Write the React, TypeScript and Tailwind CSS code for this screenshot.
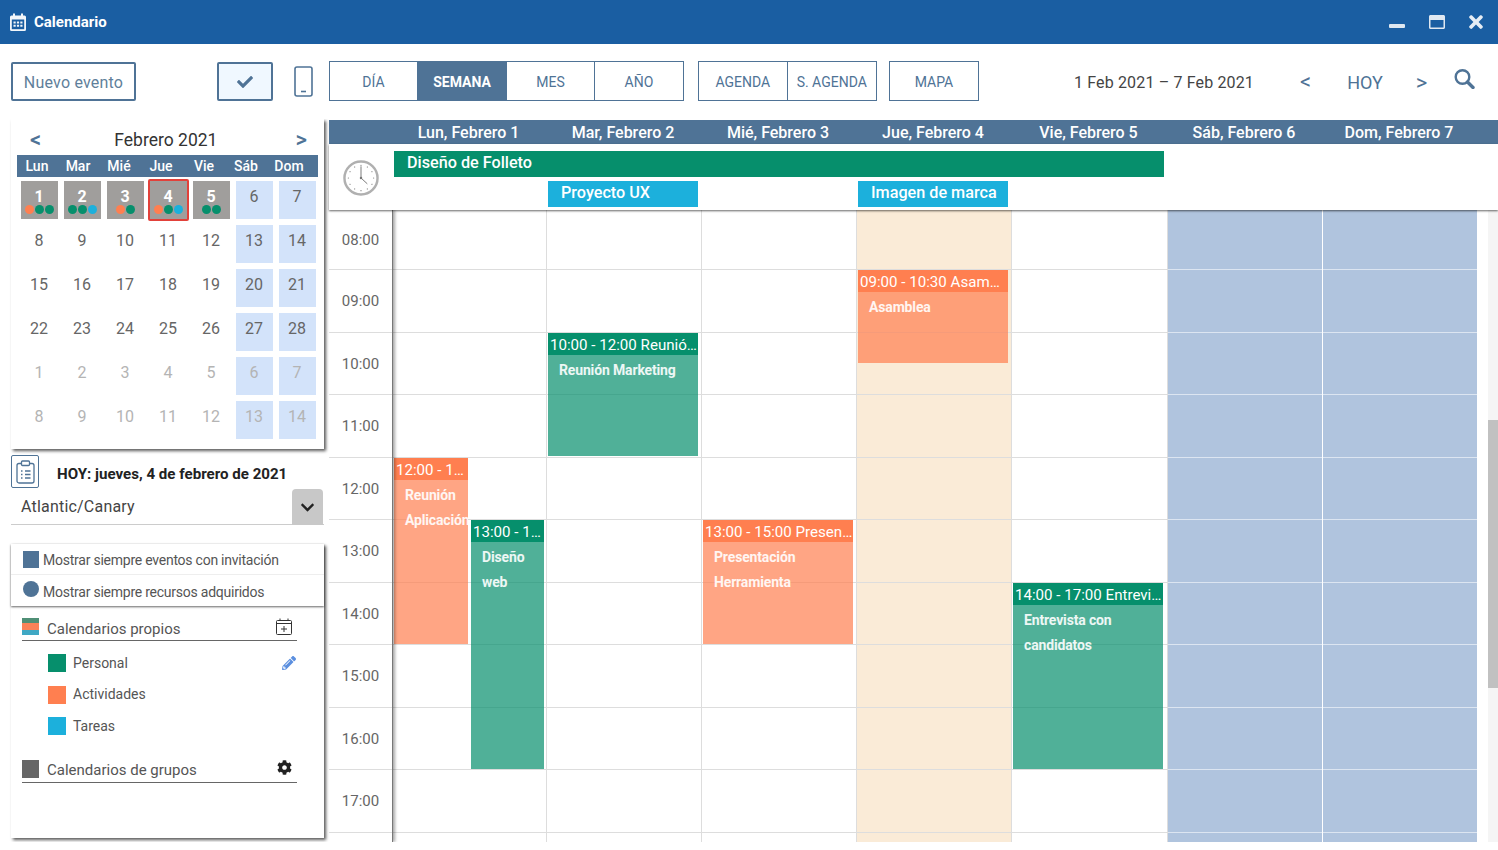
import { FaCheck, FaChevronDown, FaCog, FaPencilAlt, FaRegWindowMaximize, FaTimes } from "react-icons/fa";

const FONT = "font-['Roboto',sans-serif]";
const COLS = "grid grid-cols-[154px_155px_155px_155px_156px_155px_155px]";

const WEEK = ["Lun", "Mar", "Mié", "Jue", "Vie", "Sáb", "Dom"];
const MONTH_ROWS = [
  [1, 2, 3, 4, 5, 6, 7],
  [8, 9, 10, 11, 12, 13, 14],
  [15, 16, 17, 18, 19, 20, 21],
  [22, 23, 24, 25, 26, 27, 28],
  [1, 2, 3, 4, 5, 6, 7],
  [8, 9, 10, 11, 12, 13, 14],
];
const O = "bg-[#ff7f50]";
const G = "bg-[#068f6c]";
const B = "bg-[#1cb0dc]";
const DOTS: string[][] = [[O, G, G], [G, G, B], [O, G], [O, G, B], [G, G]];

const HOURS = ["08:00", "09:00", "10:00", "11:00", "12:00", "13:00", "14:00", "15:00", "16:00", "17:00", ""];
const ROW_H = ["h-[60px]", "h-[62.5px]", "h-[62.5px]", "h-[62.5px]", "h-[62.5px]", "h-[62.5px]", "h-[62.5px]", "h-[62.5px]", "h-[62.5px]", "h-[62.5px]", "h-[62.5px]"];

type Ev = { pos: string; head: string; body: string; time: string; text: string };
const EVENTS: Ev[][] = [
  [
    { pos: "left-px top-[248px] w-[74px] h-[186px]", head: "bg-[#ff7f50]", body: "bg-[#ff7f50]/70", time: "12:00 - 14:00 Reunión Aplicación", text: "Reunión Aplicación" },
    { pos: "left-[78px] top-[310px] w-[73px] h-[249px]", head: "bg-[#068f6c]", body: "bg-[#068f6c]/70", time: "13:00 - 17:00 Diseño web", text: "Diseño web" },
  ],
  [{ pos: "left-px top-[123px] w-[150px] h-[123px]", head: "bg-[#068f6c]", body: "bg-[#068f6c]/70", time: "10:00 - 12:00 Reunión Marketing", text: "Reunión Marketing" }],
  [{ pos: "left-px top-[310px] w-[150px] h-[124px]", head: "bg-[#ff7f50]", body: "bg-[#ff7f50]/70", time: "13:00 - 15:00 Presentación Herramienta", text: "Presentación Herramienta" }],
  [{ pos: "left-px top-[60px] w-[150px] h-[93px]", head: "bg-[#ff7f50]", body: "bg-[#ff7f50]/70", time: "09:00 - 10:30 Asamblea", text: "Asamblea" }],
  [{ pos: "left-px top-[373px] w-[150px] h-[186px]", head: "bg-[#068f6c]", body: "bg-[#068f6c]/70", time: "14:00 - 17:00 Entrevista con candidatos", text: "Entrevista con candidatos" }],
  [],
  [],
];
const COL_BG = ["", "", "", "bg-[#faebd7]", "", "bg-[#b0c4de]", "bg-[#b0c4de]"];
const DAY_HEAD = ["Lun, Febrero 1", "Mar, Febrero 2", "Mié, Febrero 3", "Jue, Febrero 4", "Vie, Febrero 5", "Sáb, Febrero 6", "Dom, Febrero 7"];

function TitleCalendarIcon() {
  return (
    <svg width="16" height="18" viewBox="0 0 16 18" fill="none">
      <path d="M3 0.5H5V2.5H11V0.5H13V2.5H14.5A1.5 1.5 0 0 1 16 4V16.5A1.5 1.5 0 0 1 14.5 18H1.5A1.5 1.5 0 0 1 0 16.5V4A1.5 1.5 0 0 1 1.5 2.5H3Z" fill="#f2f6fa" />
      <rect x="1.8" y="6.5" width="12.4" height="9.7" fill="#1a5ea2" />
      <path d="M3.5 8.5H5.7V10.4H3.5ZM6.9 8.5H9.1V10.4H6.9ZM10.3 8.5H12.5V10.4H10.3ZM3.5 11.8H5.7V13.7H3.5ZM6.9 11.8H9.1V13.7H6.9ZM10.3 11.8H12.5V13.7H10.3Z" fill="#f2f6fa" />
    </svg>
  );
}

function SearchIcon() {
  return (
    <svg width="21" height="20" viewBox="0 0 21 20" fill="none" stroke="#4f7396">
      <circle cx="8.5" cy="8" r="6.8" strokeWidth="2.4" />
      <path d="M13.5 13L19 18.5" strokeWidth="3.4" strokeLinecap="round" />
    </svg>
  );
}

function ClockIcon() {
  const ticks = Array.from({ length: 12 }, (_, i) => i * 30);
  return (
    <svg width="36" height="36" viewBox="0 0 37 37" fill="none">
      <circle cx="18.5" cy="18.5" r="17" fill="#fff" stroke="#b0b0b0" strokeWidth="2.5" />
      {ticks.map((a) => (
        <circle key={a} cx="18.5" cy="5.5" r="0.6" fill="#777" transform={`rotate(${a} 18.5 18.5)`} />
      ))}
      <path d="M18.5 6.5V18.5L25 24.5" stroke="#777" strokeWidth="1" />
      <circle cx="18.5" cy="18.5" r="1.3" fill="#777" />
    </svg>
  );
}

function PhoneIcon() {
  return (
    <svg width="19" height="31" viewBox="0 0 19 31" fill="none">
      <rect x="1" y="1" width="17" height="29" rx="2" stroke="#4f7396" strokeWidth="1.6" />
      <path d="M7 25.5H12" stroke="#4f7396" strokeWidth="1.6" />
    </svg>
  );
}

function ClipboardIcon() {
  return (
    <svg width="19" height="24" viewBox="0 0 19 24" fill="none" stroke="#4f7396" strokeWidth="1.3">
      <rect x="1" y="3.5" width="17" height="19.5" rx="2" />
      <rect x="5.5" y="1" width="8" height="4.5" rx="1" fill="#fff" />
      <path d="M5 11H6.5M9 11H14.5M5 14.5H6.5M9 14.5H14.5M5 18H6.5M9 18H14.5" />
    </svg>
  );
}

function CalPlusIcon() {
  return (
    <svg width="16" height="17" viewBox="0 0 16 17" fill="none" stroke="#333" strokeWidth="1">
      <rect x="0.5" y="2.5" width="15" height="14" rx="1" />
      <path d="M0.5 5.5H15.5M4 0.5V3M12 0.5V3M8 8V14M5 11H11" />
    </svg>
  );
}

function MiniCalendar() {
  return (
    <section className="ml-[11px] h-[330px] w-[313px] bg-white px-[6px] shadow-[2px_2px_3px_rgba(0,0,0,0.65)]">
      <div className="flex h-[36px] items-center justify-between pl-[13px] pr-[11px] pt-[6px] text-[#4f7396]">
        <span className="text-[22px] font-medium leading-none">&lt;</span>
        <span className="mr-[5px] text-[17.5px] text-[#333]">Febrero 2021</span>
        <span className="text-[22px] font-medium leading-none">&gt;</span>
      </div>
      <div className="h-[22px] bg-[#4f7396]">
        <div className="-ml-px grid h-[22px] grid-cols-[42px_40px_42px_42px_44px_40px_46px] items-center text-center text-[14px] font-medium text-white">
          {WEEK.map((d) => <span key={d}>{d}</span>)}
        </div>
      </div>
      <div className="ml-px grid grid-cols-[repeat(7,43px)] pt-px">
        {MONTH_ROWS.flatMap((row, r) =>
          row.map((n, c) => {
            const inMonth = r < 4;
            const active = r === 0 && c < 5;
            const weekend = c > 4;
            const today = r === 0 && c === 3;
            return (
              <div key={`${r}-${c}`} className="flex h-[44px] items-center justify-center">
                <div
                  className={`relative flex h-[38px] w-[37px] justify-center pr-px pt-[7px] text-[16px] leading-[18px] ${
                    active ? "bg-[#a09e9c] font-bold text-white" : weekend ? "bg-[#d3e3fa]" : ""
                  } ${!active && inMonth ? "text-[#666]" : ""} ${!active && !inMonth ? "text-[#b4b4b4]" : ""}`}
                >
                  {n}
                  {active && (
                    <span className="absolute bottom-[5px] left-0 right-0 flex justify-center gap-px">
                      {DOTS[c].map((dot, i) => <span key={i} className={`h-[9px] w-[9px] rounded-full ${dot}`} />)}
                    </span>
                  )}
                  {today && <span className="absolute -inset-[2px] rounded-[2px] border-2 border-[#e2413a]" />}
                </div>
              </div>
            );
          }),
        )}
      </div>
    </section>
  );
}

function CalendarPanel() {
  const items = [
    ["Personal", "bg-[#068f6c]"],
    ["Actividades", "bg-[#ff7f50]"],
    ["Tareas", "bg-[#1cb0dc]"],
  ];
  return (
    <section className="ml-[11px] mt-[19px] h-[294px] w-[313px] bg-white text-[14px] text-[#555] shadow-[2px_2px_3px_rgba(0,0,0,0.65)]">
      <div className="tracking-[-0.24px] shadow-[0_1px_2px_rgba(0,0,0,0.6)]">
        <div className="flex h-[31px] items-end border-b border-[#eee] pb-[3px] pl-[12px]">
          <span className="mb-[3px] h-[17px] w-[16px] bg-[#4f7396]" />
          <span className="ml-[4px]">Mostrar siempre eventos con invitación</span>
        </div>
        <div className="flex h-[31px] items-end pb-[3px] pl-[12px]">
          <span className="mb-[6px] h-[16px] w-[16px] rounded-full bg-[#4f7396]" />
          <span className="ml-[4px]">Mostrar siempre recursos adquiridos</span>
        </div>
      </div>
      <div className="ml-[11px] mt-[12px] w-[275px]">
        <div className="flex h-[23px] items-start border-b border-[#666]">
          <span className="flex h-[17px] w-[17px] flex-col">
            <span className="h-[5px] bg-[#4f8f76]" />
            <span className="h-[7px] bg-[#f98258]" />
            <span className="h-[5px] bg-[#3fa8c4]" />
          </span>
          <span className="ml-[8px] pt-px text-[15px] leading-[20px] text-[#555]">Calendarios propios</span>
          <span className="ml-auto mr-[5px]"><CalPlusIcon /></span>
        </div>
        <div className="mt-[13px] flex flex-col gap-[13.5px] pl-[26px]">
          {items.map(([label, color], i) => (
            <div key={label} className="flex h-[18px] items-center">
              <span className={`h-[18px] w-[18px] ${color}`} />
              <span className="ml-[7px]">{label}</span>
              {i === 0 && <FaPencilAlt className="ml-auto mr-[1px] text-[14px] text-[#5b8fdf]" />}
            </div>
          ))}
        </div>
        <div className="mt-[25px] flex h-[23px] items-start border-b border-[#666]">
          <span className="h-[18px] w-[17px] bg-[#666]" />
          <span className="ml-[8px] text-[15px] leading-[20px] text-[#555]">Calendarios de grupos</span>
          <FaCog className="ml-auto mr-[5px] text-[15px] text-[#222]" />
        </div>
      </div>
    </section>
  );
}

function Sidebar() {
  return (
    <aside className="w-[329px] shrink-0">
      <MiniCalendar />
      <div className="relative ml-[11px] mt-[6px] h-[70px] w-[313px]">
        <div className="flex items-start">
          <span className="flex h-[33px] w-[28px] items-center justify-center rounded-[2px] border border-[#4f7396]">
            <ClipboardIcon />
          </span>
          <span className="ml-[18px] mt-[9px] text-[15.1px] font-bold leading-[20px] text-[#222]">HOY: jueves, 4 de febrero de 2021</span>
        </div>
        <div className="mt-px flex h-[36px] items-center border-b border-[#ccc] pl-[10px] text-[16px] tracking-[0.2px] text-[#444]">Atlantic/Canary</div>
        <span className="absolute right-[1px] top-[34px] flex h-[36px] w-[31px] items-center justify-center rounded-t-[4px] bg-[#c8c8c8] text-[15px] text-[#222]">
          <FaChevronDown />
        </span>
      </div>
      <CalendarPanel />
    </aside>
  );
}

function Tab({ label, active, width, last }: { label: string; active?: boolean; width: string; last?: boolean }) {
  return (
    <span
      className={`flex items-center justify-center pt-[3px] text-[14px] ${width} ${last ? "" : "border-r border-[#4f7396]"} ${
        active ? "bg-[#4f7396] font-bold text-white" : "text-[#4f7396]"
      }`}
    >
      {label}
    </span>
  );
}

function Toolbar() {
  return (
    <div className="h-[75px] shrink-0 pt-[17px] text-[#4f7396]">
      <div className="flex h-[40px] items-center">
        <button className="ml-[11px] mt-px h-[39px] w-[125px] rounded-[2px] border-2 border-[#4f7396] pt-[3px] text-[16px] tracking-[0.2px] text-[#5f7f9b]">Nuevo evento</button>
        <button className="ml-[81px] mt-px flex h-[39px] w-[56px] items-center justify-center rounded-[2px] border-2 border-[#4f7396] bg-[#f0f8ff] text-[16px]"><FaCheck /></button>
        <span className="ml-[21px] mt-px flex"><PhoneIcon /></span>
        <div className="ml-[16px] flex h-[40px] w-[355px] border border-[#4f7396]">
          <Tab label="DÍA" width="w-[88px]" />
          <Tab label="SEMANA" active width="w-[89px]" />
          <Tab label="MES" width="w-[88px]" />
          <Tab label="AÑO" width="w-[88px]" last />
        </div>
        <div className="ml-[14px] flex h-[40px] w-[179px] border border-[#4f7396]">
          <Tab label="AGENDA" width="w-[89px]" />
          <Tab label="S. AGENDA" width="w-[89px]" last />
        </div>
        <div className="ml-[12px] flex h-[40px] w-[90px] border border-[#4f7396]">
          <Tab label="MAPA" width="w-[88px]" last />
        </div>
        <span className="ml-[95px] mt-[4px] text-[16px] tracking-[0.15px] text-[#444]">1 Feb 2021 – 7 Feb 2021</span>
        <span className="ml-[46px] mt-[2px] text-[22px] leading-none">&lt;</span>
        <span className="ml-[36px] mt-[2px] text-[18px]">HOY</span>
        <span className="ml-[33px] mt-[4px] text-[22px] leading-none">&gt;</span>
        <span className="ml-[27px] mb-[4px]"><SearchIcon /></span>
      </div>
    </div>
  );
}

function EventBox({ ev }: { ev: Ev }) {
  return (
    <div className={`absolute flex flex-col overflow-hidden ${ev.pos} ${ev.body}`}>
      <div className={`h-[22px] shrink-0 truncate pl-[2px] pt-px text-[15.1px] leading-[22px] text-white ${ev.head}`}>{ev.time}</div>
      <div className="pl-[11px] pt-[3px] text-[14px] font-bold leading-[25px] tracking-[-0.15px] text-white/90">{ev.text}</div>
    </div>
  );
}

function WeekView() {
  return (
    <div className="relative flex min-w-0 flex-1 flex-col pt-px">
      <div className="flex h-[24px] shrink-0 items-center bg-[#4f7396] pt-[2px]">
        <span className="w-[64px] shrink-0" />
        <div className={COLS}>
          {DAY_HEAD.map((d) => (
            <span key={d} className="pr-[3px] text-center text-[16px] font-medium text-white">{d}</span>
          ))}
        </div>
      </div>
      <div className="relative z-10 flex h-[66px] shrink-0 bg-white shadow-[0_1px_2px_rgba(0,0,0,0.6)]">
        <span className="flex w-[63px] shrink-0 items-center justify-center pt-px"><ClockIcon /></span>
        <div className={`${COLS} ml-px grid-rows-[26px_26px] gap-y-[4px] pt-[7px] text-[16.2px] font-medium leading-[23px] text-white`}>
          <div className="col-start-1 col-end-6 mr-[4px] ml-px bg-[#068f6c] pl-[13px]">Diseño de Folleto</div>
          <div className="col-start-2 row-start-2 ml-px mr-[4px] bg-[#1cb0dc] pl-[13px]">Proyecto UX</div>
          <div className="col-start-4 row-start-2 ml-px mr-[4px] bg-[#1cb0dc] pl-[13px]">Imagen de marca</div>
        </div>
      </div>
      <div className="flex min-h-0 flex-1 overflow-hidden">
        <div className="relative z-[5] w-[64px] shrink-0 border-r border-[#777] shadow-[2px_0_3px_rgba(0,0,0,0.35)]">
          {HOURS.map((h, i) => (
            <div key={i} className={`flex items-center justify-center border-b border-[#ddd] pt-px text-[15px] text-[#666] ${ROW_H[i]}`}>{h}</div>
          ))}
        </div>
        <div className={COLS}>
          {EVENTS.map((evs, c) => (
            <div key={c} className={`relative border-r ${c > 4 ? "border-white" : "border-[#ddd]"} ${COL_BG[c]}`}>
              {HOURS.map((_, i) => (
                <div key={i} className={`border-b ${c > 4 ? "border-[#dce5f1]" : "border-[#ddd]"} ${ROW_H[i]}`} />
              ))}
              {evs.map((ev) => <EventBox key={ev.time} ev={ev} />)}
            </div>
          ))}
        </div>
        <div className="ml-[10px] w-[10px] shrink-0 bg-[#f5f5f5]">
          <div className="mt-[210px] h-[268px] bg-[#c1c1c1]" />
        </div>
      </div>
    </div>
  );
}

export default function App() {
  return (
    <div className={`h-[850px] w-[1498px] overflow-hidden bg-white ${FONT}`}>
      <header className="flex h-[44px] items-center bg-[#1a5ea2] text-white">
        <span className="ml-[10px] flex"><TitleCalendarIcon /></span>
        <span className="ml-[8px] mt-[1px] text-[15px] font-bold">Calendario</span>
        <span className="ml-auto mt-[7px] h-[4px] w-[16px] rounded-[1px] bg-[#dfe8f1]" />
        <FaRegWindowMaximize className="ml-[24px] text-[16px] text-[#dfe8f1]" />
        <FaTimes className="ml-[21px] mr-[12px] text-[20px] text-[#e6edf4]" />
      </header>
      <Toolbar />
      <div className="flex h-[723px] overflow-hidden">
        <Sidebar />
        <WeekView />
      </div>
    </div>
  );
}
